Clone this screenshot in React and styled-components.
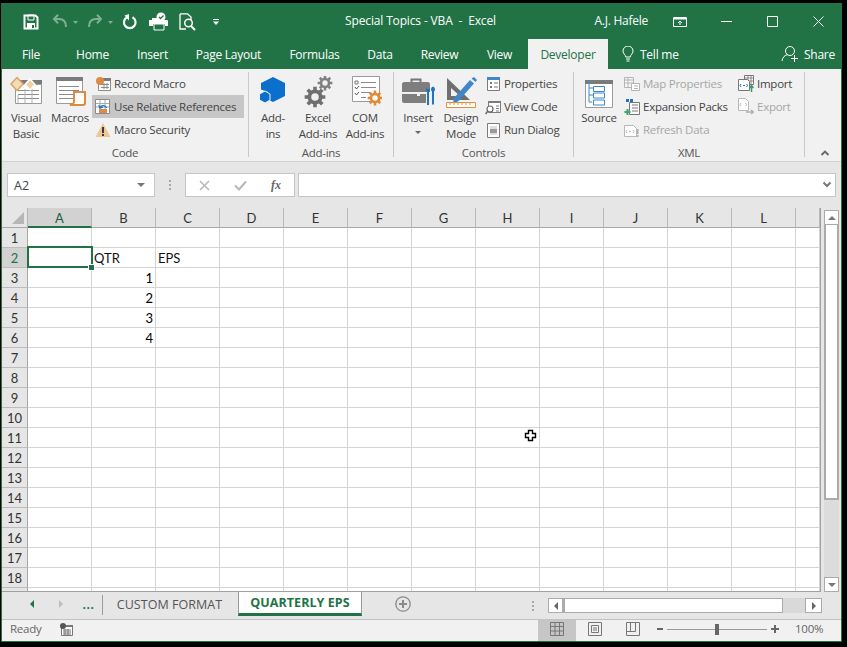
import React from "react";
import styled, { createGlobalStyle } from "styled-components";

const UI = `"Open Sans", "Noto Sans", sans-serif`;
const CELL = `Lato, "Liberation Sans", sans-serif`;
const GREEN = "#217346";

const Global = createGlobalStyle`
  html, body { margin: 0; padding: 0; background: #000; }
  body { font-family: ${UI}; overflow: hidden; }
  #root { padding: 3px 0 0 1px; width: 846px; height: 644px; box-sizing: border-box; }
`;

const Win = styled.div`
  position: relative;
  width: 841px; height: 639px; box-sizing: border-box;
  border: 1px solid ${GREEN};
  display: flex; flex-direction: column;
  background: #e6e6e6; overflow: hidden;
  font-size: 11.5px; letter-spacing: -0.25px; color: #444;
  svg { display: block; flex: none; }
`;

/* ---------- title bar ---------- */
const TitleBar = styled.div`
  height: 35px; background: ${GREEN}; color: #fff;
  display: grid; grid-template-columns: 1fr auto 1fr; align-items: center;
`;
const Qat = styled.div`display: flex; align-items: center; padding-left: 14px;`;
const QatSlot = styled.div`
  width: ${p => p.$w}px; height: 35px;
  display: flex; align-items: center; justify-content: center;
  opacity: ${p => (p.$dim ? 0.42 : 1)};
`;
const Title = styled.div`font-size: 12px; white-space: pre; position: relative; top: -1px; letter-spacing: -0.15px; left: -1px;`;
const TitleRight = styled.div`display: flex; align-items: center; justify-content: flex-end;`;
const UserName = styled.div`font-size: 12px; margin-right: 9px; position: relative; top: -1px;`;
const WinBtn = styled.div`
  width: 46px; height: 35px; display: flex; align-items: center; justify-content: center;
`;

/* ---------- tabs ---------- */
const TabRow = styled.div`
  height: 30px; background: ${GREEN}; display: flex; align-items: stretch; color: #fff;
  font-size: 12px;
`;
const Tab = styled.div`
  width: ${p => p.$w}px; flex: none; margin-left: ${p => p.$ml || 0}px; margin-right: ${p => p.$mr || 0}px;
  display: flex; align-items: center; justify-content: center;
  background: ${p => (p.$active ? "#f1f1f1" : "transparent")};
  color: ${p => (p.$active ? GREEN : "#fff")};
`;
const TellMe = styled.div`display: flex; align-items: center; gap: 6px; margin-left: 14px;`;
const Share = styled.div`display: flex; align-items: center; gap: 5px; margin-left: auto; margin-right: 6px;`;

/* ---------- ribbon ---------- */
const Ribbon = styled.div`
  height: 93px; box-sizing: border-box; background: #f1f1f1;
  border-bottom: 1px solid #d2d2d2;
  display: flex; padding-top: 3px;
`;
const Group = styled.div`
  width: ${p => p.$w}px; height: 85px; box-sizing: border-box; flex: none;
  border-right: 1px solid #c8c8c8;
  display: flex; flex-direction: column;
`;
const GroupBody = styled.div`display: flex; height: 74px;`;
const GroupLabel = styled.div`
  height: 11px; line-height: 14px; text-align: center; color: #555; font-size: 11.5px;
`;
const Big = styled.div`
  width: ${p => p.$w}px; flex: none; padding-top: 4px; box-sizing: border-box;
  display: flex; flex-direction: column; align-items: center; text-align: center; line-height: 16px;
  white-space: nowrap;
`;
const BigIcon = styled.div`height: 34px; display: flex; justify-content: center;`;
const Caret = styled.div`
  width: 0; height: 0; margin-top: 5px;
  border: 3px solid transparent; border-top: 3px solid #666; border-bottom: 0;
`;
const Stack = styled.div`
  width: ${p => p.$w}px; flex: none; display: flex; flex-direction: column;
  margin-left: ${p => p.$ml || 0}px;
`;
const Small = styled.div`
  height: 23px; display: flex; align-items: center; gap: 3px; white-space: nowrap;
  padding-left: ${p => p.$pad ?? 3}px;
  background: ${p => (p.$on ? "#c6c6c6" : "transparent")};
  color: ${p => (p.$dim ? "#a6a6a6" : "#444")};
`;
const Collapse = styled.div`
  margin-left: 15px; align-self: flex-end; padding-bottom: 4px;
`;

/* ---------- formula bar ---------- */
const FormulaBar = styled.div`
  height: 46px; box-sizing: border-box; padding: 11px 5px 0 5px; display: flex; align-items: flex-start;
  background: #e6e6e6; color: #444;
`;
const Field = styled.div`
  height: 24px; box-sizing: border-box; background: #fff; border: 1px solid #c6c6c6;
  width: ${p => (p.$w ? p.$w + "px" : "auto")}; flex: ${p => (p.$w ? "none" : 1)};
  margin-left: ${p => p.$ml || 0}px;
  display: flex; align-items: center;
`;
const NameText = styled.span`font-size: 12.5px; letter-spacing: 0; padding-left: 6px; flex: 1;`;
const Grip = styled.div`
  width: 30px; height: 24px; display: flex; align-items: center; justify-content: center;
`;
const FnSlot = styled.div`flex: 1; display: flex; justify-content: center; align-items: center;`;
const EndSlot = styled.div`
  flex: none; width: ${p => p.$w}px; margin-left: auto;
  display: flex; justify-content: center; align-items: center;
`;

/* ---------- sheet ---------- */
const SheetRow = styled.div`display: flex; height: 384px;`;
const GridPane = styled.div`
  width: 819px; height: 384px; box-sizing: border-box; flex: none; overflow: hidden; background: #fff;
  border-right: 1px solid #a0a0a0; border-bottom: 1px solid #a0a0a0;
  display: grid; grid-template-columns: 26px repeat(12, 64px) 24px; grid-auto-rows: 20px;
  font-family: ${CELL}; font-size: 13px; letter-spacing: 0; color: #111;
`;
const Corner = styled.div`
  background: #e6e6e6; border-right: 1px solid #b4b4b4; border-bottom: 1px solid #a8a8a8;
  box-sizing: border-box; display: flex; align-items: flex-end; justify-content: flex-end;
  padding: 0 3px 3px 0;
  &::before {
    content: ""; width: 12px; height: 12px; background: #b6b6b6;
    clip-path: polygon(100% 0, 100% 100%, 0 100%);
  }
`;
const ColHead = styled.div`
  box-sizing: border-box; text-align: center; line-height: 20px;
  background: ${p => (p.$on ? "#d2d2d2" : "#e6e6e6")};
  color: ${p => (p.$on ? "#1e5e3c" : "#333")};
  border-right: 1px solid #b8b8b8;
  border-bottom: ${p => (p.$on ? `2px solid ${GREEN}` : "1px solid #a8a8a8")};
`;
const RowHead = styled.div`
  box-sizing: border-box; text-align: center; line-height: 21px;
  background: ${p => (p.$on ? "#d2d2d2" : "#e6e6e6")};
  color: ${p => (p.$on ? GREEN : "#333")};
  border-right: 1px solid #a8a8a8; border-bottom: 1px solid #bcbcbc;
`;
const Cell = styled.div`
  position: relative; box-sizing: border-box; line-height: 21px; padding: 0 2px;
  border-right: 1px solid #d4d4d4; border-bottom: 1px solid #d4d4d4;
  text-align: ${p => (p.$num ? "right" : "left")};
  ${p => p.$num && "color:#000;"}
`;
const Selection = styled.div`
  position: absolute; left: -1px; top: -2px; width: 66px; height: 22px; box-sizing: border-box;
  border: 2px solid ${GREEN}; z-index: 2;
  &::after {
    content: ""; position: absolute; right: -3px; bottom: -4px; width: 5px; height: 5px;
    background: ${GREEN}; outline: 1px solid #fff;
  }
`;
const VStrip = styled.div`
  flex: 1; display: flex; flex-direction: column; padding: 2px 0 0 3px; box-sizing: border-box;
`;
const VBar = styled.div`
  width: 15px; height: 382px; display: flex; flex-direction: column; background: #dcdcdc;
`;
const ScrollBtn = styled.div`
  width: ${p => p.$w || 15}px; height: ${p => p.$h || 15}px; box-sizing: border-box; flex: none;
  background: #fff; border: 1px solid #ababab;
  display: flex; align-items: center; justify-content: center;
`;
const VThumb = styled.div`
  height: 275px; box-sizing: border-box; background: #fff;
  border: 2px solid #ababab; border-top: 0;
`;
const VTrack = styled.div`flex: 1;`;

/* ---------- sheet tabs ---------- */
const TabBar = styled.div`
  height: 28px; box-sizing: border-box; background: #e6e6e6;
  border-bottom: 1px solid #c2c2c2;
  display: flex; align-items: flex-start;
  padding-left: 15px;
`;
const Nav = styled.div`
  width: ${p => p.$w || 29}px; height: 24px; flex: none; display: flex; align-items: center; justify-content: center;
  color: ${GREEN}; font-weight: 700; font-size: 12px; letter-spacing: 0.5px;
`;
const NavSep = styled.div`width: 1px; height: 20px; margin-top: 3px; background: #9c9c9c; flex: none;`;
const SheetTab = styled.div`
  width: ${p => p.$w}px; height: 24px; box-sizing: border-box; flex: none;
  display: flex; align-items: center; justify-content: center; font-size: 12.5px; letter-spacing: 0.05px;
  ${p => p.$active
    ? `background:#fff;color:${GREEN};font-weight:700;border-left:1px solid #9a9a9a;border-right:1px solid #9a9a9a;border-bottom:3px solid ${GREEN};`
    : "color:#555;padding-right:2px;"}
`;
const AddSheet = styled.div`margin-left: 30px; width: 22px; height: 24px; display: flex; align-items: center; justify-content: center;`;
const HScrollWrap = styled.div`
  margin-left: auto; margin-right: 19px; display: flex; align-items: center; gap: 14px; padding-top: 6px;
`;
const HBar = styled.div`display: flex; width: 274px; height: 15px; background: #d9d9d9;`;
const HThumb = styled.div`
  width: 220px; box-sizing: border-box; background: #fff; border: 1px solid #ababab; border-left-width: 2px;
`;
const Dots = styled.div`display: flex; flex-direction: column; gap: 2px;
  i { display:block; width:2px; height:2px; background:#a8a8a8; }`;

/* ---------- status ---------- */
const Status = styled.div`
  height: 21px; box-sizing: border-box; background: #f1f1f1; display: flex; align-items: center; color: #666;
  padding: 0 0 3px 8px;
`;
const Ready = styled.div`width: 50px; font-size: 11.5px; margin-bottom: 1px;`;
const StatusRight = styled.div`margin: 0 0 -3px auto; display: flex; align-items: center; height: 21px; padding-right: 19px;`;
const ViewBtn = styled.div`
  width: 38px; height: 21px; box-sizing: border-box; padding-bottom: 3px; display: flex; align-items: center; justify-content: center;
  background: ${p => (p.$on ? "#c6c6c6" : "transparent")};
`;
const Zoom = styled.div`display: flex; align-items: center; margin-left: 5px; padding-bottom: 3px;`;
const Track = styled.div`
  width: 100px; height: 1px; background: #9a9a9a; margin: 0 4px; position: relative;
  display: flex; justify-content: center; align-items: center;
`;
const Thumb = styled.div`width: 4px; height: 11px; background: #666; flex: none;`;
const ZoomPct = styled.div`margin-left: 16px; padding-bottom: 4px; width: 27px; white-space: nowrap;`;
const Pointer = styled.div`position: absolute; left: 521px; top: 424px; z-index: 5;`;

/* ---------- icons ---------- */
const S = ({ w, h = w, children }) => <svg width={w} height={h} viewBox={`0 0 ${w} ${h}`} fill="none">{children}</svg>;

const gearPath = (x, y, R, n = 8) => {
  const r0 = R * 0.72, pts = [], step = (Math.PI * 2) / n;
  for (let i = 0; i < n; i++) {
    const a = i * step - Math.PI / 2;
    const d = step * 0.22, e = step * 0.3;
    [[r0, a - e], [R, a - d], [R, a + d], [r0, a + e]].forEach(([r, t]) =>
      pts.push(`${(x + r * Math.cos(t)).toFixed(2)} ${(y + r * Math.sin(t)).toFixed(2)}`));
  }
  return `M${pts.join("L")}Z`;
};
const Gear = ({ x, y, r, c = "#6f6f6f", hole = "#f1f1f1" }) => (
  <g>
    <path d={gearPath(x, y, r)} fill={c} />
    <circle cx={x} cy={y} r={r * 0.36} fill={hole} />
  </g>
);
const SheetLines = ({ x, y, w, n = 4, step = 4, c = "#8c8c8c" }) => (
  <g stroke={c}>
    {Array.from({ length: n }).map((_, i) => (
      <path key={i} d={`M${x} ${y + i * step + .5}h${w}`} />
    ))}
  </g>
);

const VbIcon = () => (
  <S w={34}>
    <path d="M6.500 8.500h26v19h-26z" fill="#fff" stroke="#9a9a9a" />
    <path d="M6 4h27v4H6z" fill="#7b7b7b" />
    <SheetLines x={9} y={14} w={21} n={3} />
    <path d="M9 19v8M16 13v14M23 13v14" stroke="#b0b0b0" />
    <path d="M8 1.500l6 6.500-6 6.500-6-6.500z" fill="#f4dcb6" stroke="#dca566" strokeWidth="1.500" />
    <path d="M21 3l5 5.500-5 5.500-5-5.500z" fill="#f0d2a6" stroke="#fff" strokeWidth="1.500" />
  </S>
);
const MacroIcon = () => (
  <S w={34}>
    <path d="M3.500 1.500h26v26h-26z" fill="#fff" stroke="#9a9a9a" />
    <path d="M3 1h27v4H3z" fill="#7b7b7b" />
    <SheetLines x={6} y={10} w={20} n={4} step={4} />
    <path d="M21 16h11v11c0 2-1 2-2 2H17c2-1 4-1 4-3z" fill="#fff" stroke="#dd8a42" strokeWidth="2" />
  </S>
);
const RecordIcon = () => (
  <S w={16}>
    <path d="M3.500 2.500h12v12h-12z" fill="#fff" stroke="#8c8c8c" />
    <path d="M3 2h13v3H3z" fill="#7b7b7b" />
    <path d="M6 8.500h8M6 11.500h8M9 7v6M12 7v6" stroke="#8c8c8c" />
    <circle cx="5" cy="5" r="4" fill="#dd8a42" />
  </S>
);
const RelativeIcon = () => (
  <S w={16}>
    <path d="M.5.500h14v14H.5z" fill="#fff" stroke="#8a8a8a" />
    <path d="M1 4.500h13M1 8h13M5 1v13M10 1v13" stroke="#a8a8a8" />
    <path d="M4 10h8v4H4z" fill="#dd8a42" />
    <path d="M11.500 9c-1-3-5-3-6.500-.5M3.800 6l1 3 3-.6" stroke="#1f74c6" strokeWidth="1.300" />
  </S>
);
const WarnIcon = () => (
  <S w={16}>
    <path d="M8 1l7.500 14H.5z" fill="#edc795" />
    <path d="M7 5h2v6H7zM7 12h2v2H7z" fill="#3a3a3a" />
  </S>
);
const HexIcon = () => (
  <S w={30}>
    <path d="M15 2l12 6v13l-12 6-5-2.500V17l-7-2.500V8z" fill="#0b6fcd" transform="translate(0 -1)" />
    <path d="M7 15l5 3v6l-5 3-5.500-3v-6z" fill="#0b6fcd" stroke="#f1f1f1" strokeWidth="1" />
  </S>
);
const GearsIcon = () => (
  <S w={34}>
    <Gear x={14} y={21} r={10.500} />
    <Gear x={24} y={7} r={7.500} c="#808080" />
  </S>
);
const ComIcon = () => (
  <S w={34}>
    <path d="M4.500.500h27v25h-27z" fill="#fff" stroke="#9a9a9a" />
    <path d="M7 5h3v3H7z" stroke="#7a7a7a" />
    <path d="M13 6.500h15M13 11.500h15M13 16.500h9M13 21.500h5" stroke="#8a8a8a" />
    <path d="M7 11l1.500 2 2.500-3M7 17l1.500 2 2.500-3" stroke="#555" />
    <Gear x={27} y={22} r={7.500} c="#e28a33" hole="#fff" />
  </S>
);
const InsertIcon = () => (
  <S w={34}>
    <path d="M10.500 6V3.500h9V6" stroke="#777" strokeWidth="2" />
    <path d="M3 6h24c1 0 2 1 2 2v8H1V8c0-1 1-2 2-2z" fill="#7e7e7e" />
    <path d="M1 18h15v2h3v-2h6v9H3c-1 0-2-1-2-2z" fill="#7e7e7e" />
    <path d="M25 11v4l1 1v13h2V16l1-1v-4l-1 2h-2zM32 10.500a3 3 0 0 0-1 5v13h2v-13a3 3 0 0 0-1-5z" fill="#1f74c6" />
  </S>
);
const DesignIcon = () => (
  <S w={34} h={34}>
    <path d="M3 2v22h23zM7 12v8h9z" fill="#6f6f6f" fillRule="evenodd" />
    <path d="M10 22L26 4l4 3.500L14 25.500 9 27z" fill="#3f87ca" />
    <path d="M27.500 2.500l4 3.500 1.500-2-3-3z" fill="#3f87ca" />
    <path d="M2.500 26.500h29v5h-29z" fill="#fff" stroke="#e0903f" />
    <path d="M6 27v2M10 27v2M14 27v2M18 27v2M22 27v2M26 27v2" stroke="#e0903f" />
  </S>
);
const PropsIcon = () => (
  <S w={16}>
    <path d="M2.500 1.500h12v13h-12z" fill="#fff" stroke="#7c7c7c" />
    <path d="M2 1h13v3H2z" fill="#3f87ca" />
    <path d="M5 6h2v2H5zM5 10h2v2H5z" fill="#777" />
    <path d="M9 7h4M9 11h4" stroke="#777" />
  </S>
);
const ViewCodeIcon = () => (
  <S w={16}>
    <path d="M3.500 2.500h12v11h-12z" fill="#fff" stroke="#7c7c7c" />
    <path d="M3 2h13v2H3z" fill="#7b7b7b" />
    <path d="M11 7h3M11 9.500h3M11 12h3" stroke="#7c7c7c" />
    <circle cx="5" cy="10" r="3" fill="#fff" stroke="#666" strokeWidth="1.200" />
    <path d="M3 12l-2.500 3" stroke="#666" strokeWidth="1.500" />
  </S>
);
const RunIcon = () => (
  <S w={16}>
    <path d="M2.500 1.500h12v14h-12z" fill="#fff" stroke="#7c7c7c" />
    <path d="M5 4h7v9H5z" fill="#ddd" />
    <path d="M5 7h7v4H5z" fill="#999" />
  </S>
);
const SourceIcon = () => (
  <S w={34}>
    <path d="M3.500 4.500h27v27h-27z" fill="#fff" stroke="#9a9a9a" />
    <path d="M3 4h28v4H3z" fill="#7b7b7b" />
    <path d="M7 4v22h3M7 12h4M7 19h4" stroke="#3f87ca" />
    <path d="M11.500 10.500h11v5h-11zM11.500 17h11v5h-11zM11.500 24h11v5h-11z" stroke="#3f87ca" fill="#fff" />
  </S>
);
const MapIcon = () => (
  <S w={16}>
    <g stroke="#b4b4b4">
      <path d="M.5 1.500h9v10h-9z" fill="#f6f6f6" />
      <path d="M1 4h8M1 7h8M4 2v9" />
      <path d="M7.500 7.500h8v7h-8z" fill="#fff" />
      <path d="M10 10h4M10 12.500h4" />
    </g>
  </S>
);
const PacksIcon = () => (
  <S w={16} h={18}>
    <path d="M5.500 4.500h10v12h-10z" fill="#fff" stroke="#777" />
    <path d="M8 7h6M8 10h6M8 13h6" stroke="#777" />
    <path d="M2 1h3v3H2zM6 1h3v3H6z" fill="#1f74c6" />
    <path d="M3.500 11v6M.5 14h6" stroke="#3aa76d" strokeWidth="2" />
  </S>
);
const DocXml = ({ c = "#b8b8b8", text = "#b8b8b8" }) => (
  <g>
    <path d="M.5 3.500h9l3 3v8h-12z" fill="#fff" stroke={c} />
    <path d="M3 8l-1 1.500L3 11M9 8l1 1.500L9 11" stroke={text} />
    <path d="M5 9h2v1H5z" fill={text} />
  </g>
);
const RefreshIcon = () => (
  <S w={16}><DocXml /><path d="M13.500 7v5M13.500 13v2" stroke="#b0b0b0" strokeWidth="2" /></S>
);
const ImportIcon = () => (
  <S w={16} h={18}>
    <path d="M6.500.500h9v9h-9z" fill="#fff" stroke="#777" />
    <path d="M7 3h8M7 6h8M10 1v8M13 1v8" stroke="#888" />
    <path d="M.5 4.500h9l2 2v9H.5z" fill="#fff" stroke="#777" />
    <path d="M3 9l-1 1.500L3 12M8.500 9l1 1.500-1 1.500" stroke="#1f74c6" />
    <path d="M5 10h2v1H5z" fill="#1f74c6" />
    <path d="M13.500 17v-6M11.500 13l2-2.500 2 2.500" stroke="#3a9a6a" strokeWidth="1.500" />
  </S>
);
const ExportIcon = () => (
  <S w={16} h={18}>
    <path d="M.5.500h7l3 3v9H.5z" fill="#fff" stroke="#b8b8b8" />
    <path d="M3 5l-1 1.500L3 8M7.500 5l1 1.500-1 1.500" stroke="#b8b8b8" />
    <path d="M8 14h7M13 12l2.500 2-2.500 2" stroke="#b0b0b0" strokeWidth="1.300" />
  </S>
);

const SaveIcon = () => (
  <S w={16}>
    <path d="M1.500 1.500h11l2 2v11h-13z" stroke="#fff" strokeWidth="2" />
    <path d="M5 1h6v5H5z" stroke="#fff" strokeWidth="1" />
    <path d="M4 9h8v6H4z" fill="#fff" />
    <path d="M9 11h2v3H9z" fill={GREEN} />
  </S>
);
const Undo = ({ flip, x = 3 }) => (
  <svg width="30" height="16" viewBox="0 0 30 16" fill="none">
    <g transform={flip ? `translate(${x + 15} 0) scale(-1 1)` : `translate(${x} 0)`} stroke="#fff" strokeWidth="2">
      <path d="M14 13C14 6 10 5 7 5H2M6 .8L2 5l4 4.200" />
    </g>
    <path d="M24 7h5l-2.500 3z" fill="#fff" />
  </svg>
);
const RefreshQat = () => (
  <S w={16}>
    <path d="M10.500 3.200a5.800 5.800 0 1 1-5.500 0" stroke="#fff" strokeWidth="2.200" />
    <path d="M7 0v6.500L2.500 1.500z" fill="#fff" />
  </S>
);
const QuickPrint = () => (
  <S w={20}>
    <path d="M0 8h3V6h12v2h3c1 0 1 1 1 1v5h-3v-2H4v2H0z" fill="#fff" />
    <path d="M5 12h10v6H5z" fill={GREEN} stroke="#fff" />
    <circle cx="12" cy="5" r="4.500" fill="#fff" />
    <path d="M10 5l1.500 1.500L14.500 3.500" stroke={GREEN} strokeWidth="1.300" />
  </S>
);
const PreviewIcon = () => (
  <S w={18} h={18}>
    <path d="M1 .8h7.500L12 4v3M1 1v15h6" stroke="#fff" strokeWidth="1.300" />
    <circle cx="9.500" cy="10" r="3.800" stroke="#fff" strokeWidth="1.500" />
    <path d="M12 13l4 4" stroke="#fff" strokeWidth="2" />
  </S>
);
const MoreIcon = () => (
  <S w={8}>
    <path d="M1 1.500h6" stroke="#fff" /><path d="M1 3.500h6L4 7z" fill="#fff" />
  </S>
);
const RibbonOpt = () => (
  <S w={14}>
    <path d="M.5 2.500h13v9H.5z" stroke="#fff" /><path d="M1 3.500h12" stroke="#fff" strokeWidth="2" />
    <path d="M7 10V6M5 8l2-2 2 2" stroke="#fff" />
  </S>
);
const MinIcon = () => <S w={11}><path d="M0 5.500h11" stroke="#fff" /></S>;
const MaxIcon = () => <S w={11}><path d="M.5.500h10v10H.5z" stroke="#fff" /></S>;
const CloseIcon = () => <S w={11}><path d="M.5.500l10 10M10.500.500l-10 10" stroke="#fff" /></S>;
const BulbIcon = () => (
  <S w={12} h={16}>
    <path d="M3.800 11C3.500 8.500 1 8 1 5a5 5 0 0 1 10 0c0 3-2.500 3.500-2.800 6z" stroke="#fff" />
    <path d="M4 13h4M4.500 15h3" stroke="#fff" />
  </S>
);
const UserIcon = () => (
  <S w={18}>
    <circle cx="9" cy="6" r="4.500" stroke="#fff" />
    <path d="M1 16c.5-4 3-6 6-6.500" stroke="#fff" />
    <path d="M13.500 10v7M10 13.500h7" stroke="#fff" />
  </S>
);
const Chev = ({ c = "#777" }) => <S w={10} h={8}><path d="M1.500 1.500L5 5l3.500-3.500" stroke={c} strokeWidth="2" /></S>;
const ChevUp = () => <S w={10} h={7}><path d="M1.500 5L5 1.500 8.500 5" stroke="#666" strokeWidth="1.800" /></S>;
const Tri = ({ d = "down", c = "#777" }) => {
  const p = { down: "M0 0h8L4 4z", up: "M0 4h8L4 0z", left: "M4 0v8L0 4z", right: "M0 0v8l4-4z" }[d];
  const vert = d === "left" || d === "right";
  return <svg width={vert ? 4 : 8} height={vert ? 8 : 4} viewBox={vert ? "0 0 4 8" : "0 0 8 4"}><path d={p} fill={c} /></svg>;
};
const XIcon = () => <S w={11}><path d="M1 1l9 9M10 1l-9 9" stroke="#b8b8b8" strokeWidth="1.500" /></S>;
const CheckIcon = () => <S w={13} h={11}><path d="M1 5.500l4 4 7-8" stroke="#b8b8b8" strokeWidth="2" /></S>;
const FxLabel = styled.span`
  font-family: "Liberation Serif", serif; font-style: italic; font-weight: 700; font-size: 12px; color: #666; letter-spacing: 0;
`;
const PlusCircle = () => (
  <S w={16}>
    <circle cx="8" cy="8" r="7.200" stroke="#8a8a8a" strokeWidth="1.300" />
    <path d="M8 4v8M4 8h8" stroke="#8a8a8a" strokeWidth="2" />
  </S>
);
const MacroStatus = () => (
  <S w={13}>
    <path d="M1.500 3.500h11v9h-11z" fill="#fff" stroke="#777" />
    <path d="M2 2h11v2H2z" fill="#777" />
    <path d="M3 7h8M3 9h8M3 11h8M5 6v6M8 6v6" stroke="#777" />
    <circle cx="3" cy="3" r="3" fill="#555" />
  </S>
);
const NormalView = () => (
  <S w={14}><path d="M.5.500h13v13H.5zM.5 4.500h13M.5 9h13M5 .5v13M9.500.5v13" stroke="#777" /></S>
);
const LayoutView = () => (
  <S w={14}><path d="M.5.500h13v13H.5z" stroke="#777" /><path d="M3.500 3.500h7v7h-7zM5 6h4M5 8h4" stroke="#777" /></S>
);
const BreakView = () => (
  <S w={14}><path d="M.5.500h13v13H.5zM.5 9.500h9V.5M4.500.5v9" stroke="#777" /></S>
);
const Minus = () => <S w={6}><path d="M0 3h6" stroke="#666" strokeWidth="2" /></S>;
const Plus = () => <S w={8}><path d="M0 4h8M4 0v8" stroke="#666" strokeWidth="2" /></S>;
const CrossCursor = () => (
  <S w={16}>
    <path d="M5.500 2.500h4v3h3v4h-3v3h-4v-3h-3v-4h3z" fill="#fff" stroke="#000" strokeWidth="1.400" />
  </S>
);

/* ---------- data ---------- */
const COLS = ["A", "B", "C", "D", "E", "F", "G", "H", "I", "J", "K", "L", ""];
const DATA = {
  2: { B: "QTR", C: "EPS" },
  3: { B: 1 }, 4: { B: 2 }, 5: { B: 3 }, 6: { B: 4 },
};
const ROWS = Array.from({ length: 19 }, (_, i) => i + 1);

const TABS = [
  ["File", 58, 0, 2], ["Home", 61, 0, 0], ["Insert", 59], ["Page Layout", 93], ["Formulas", 79],
  ["Data", 52], ["Review", 67], ["View", 53],
];

export default function App() {
  return (
    <>
      <Global />
      <Win>
        <TitleBar>
          <Qat>
            <QatSlot $w={30}><SaveIcon /></QatSlot>
            <QatSlot $w={36} $dim><Undo /></QatSlot>
            <QatSlot $w={34} $dim><Undo flip x={4} /></QatSlot>
            <QatSlot $w={28}><RefreshQat /></QatSlot>
            <QatSlot $w={30}><QuickPrint /></QatSlot>
            <QatSlot $w={28}><PreviewIcon /></QatSlot>
            <QatSlot $w={28}><MoreIcon /></QatSlot>
          </Qat>
          <Title>Special Topics - VBA  -  Excel</Title>
          <TitleRight>
            <UserName>A.J. Hafele</UserName>
            <WinBtn><RibbonOpt /></WinBtn>
            <WinBtn><MinIcon /></WinBtn>
            <WinBtn><MaxIcon /></WinBtn>
            <WinBtn><CloseIcon /></WinBtn>
          </TitleRight>
        </TitleBar>

        <TabRow>
          {TABS.map(([t, w, ml, mr]) => <Tab key={t} $w={w} $ml={ml} $mr={mr}>{t}</Tab>)}
          <Tab $w={80} $ml={2} $active>Developer</Tab>
          <TellMe><BulbIcon />Tell me</TellMe>
          <Share><UserIcon />Share</Share>
        </TabRow>

        <Ribbon>
          <Group $w={247}>
            <GroupBody>
              <Big $w={48}><BigIcon><VbIcon /></BigIcon>Visual<br />Basic</Big>
              <Big $w={40}><BigIcon><MacroIcon /></BigIcon>Macros</Big>
              <Stack $w={152} $ml={2}>
                <Small><RecordIcon />Record Macro</Small>
                <Small $on><RelativeIcon />Use Relative References</Small>
                <Small><WarnIcon />Macro Security</Small>
              </Stack>
            </GroupBody>
            <GroupLabel>Code</GroupLabel>
          </Group>
          <Group $w={145}>
            <GroupBody>
              <Big $w={48}><BigIcon><HexIcon /></BigIcon>Add-<br />ins</Big>
              <Big $w={42}><BigIcon><GearsIcon /></BigIcon>Excel<br />Add-ins</Big>
              <Big $w={52}><BigIcon><ComIcon /></BigIcon>COM<br />Add-ins</Big>
            </GroupBody>
            <GroupLabel>Add-ins</GroupLabel>
          </Group>
          <Group $w={180}>
            <GroupBody>
              <Big $w={48}><BigIcon><InsertIcon /></BigIcon>Insert<Caret /></Big>
              <Big $w={38}><BigIcon><DesignIcon /></BigIcon>Design<br />Mode</Big>
              <Stack $w={88} $ml={2}>
                <Small><PropsIcon />Properties</Small>
                <Small><ViewCodeIcon />View Code</Small>
                <Small><RunIcon />Run Dialog</Small>
              </Stack>
            </GroupBody>
            <GroupLabel>Controls</GroupLabel>
          </Group>
          <Group $w={231}>
            <GroupBody>
              <Big $w={50}><BigIcon><SourceIcon /></BigIcon>Source</Big>
              <Stack $w={114}>
                <Small $pad={0} $dim><MapIcon />Map Properties</Small>
                <Small $pad={0}><PacksIcon />Expansion Packs</Small>
                <Small $pad={0} $dim><RefreshIcon />Refresh Data</Small>
              </Stack>
              <Stack $w={60}>
                <Small $pad={0}><ImportIcon />Import</Small>
                <Small $pad={0} $dim><ExportIcon />Export</Small>
              </Stack>
            </GroupBody>
            <GroupLabel>XML</GroupLabel>
          </Group>
          <Collapse><ChevUp /></Collapse>
        </Ribbon>

        <FormulaBar>
          <Field $w={148}>
            <NameText>A2</NameText>
            <EndSlot $w={26}><Tri /></EndSlot>
          </Field>
          <Grip><Dots><i /><i /><i /></Dots></Grip>
          <Field $w={110}>
            <FnSlot><XIcon /></FnSlot>
            <FnSlot><CheckIcon /></FnSlot>
            <FnSlot><FxLabel>fx</FxLabel></FnSlot>
          </Field>
          <Field $ml={3}>
            <EndSlot $w={16}><Chev /></EndSlot>
          </Field>
        </FormulaBar>

        <SheetRow>
          <GridPane>
            <Corner />
            {COLS.map((c, i) => <ColHead key={i} $on={c === "A"}>{c}</ColHead>)}
            {ROWS.map(r => (
              <React.Fragment key={r}>
                <RowHead $on={r === 2}>{r < 19 ? r : ""}</RowHead>
                {COLS.map((c, i) => {
                  const v = DATA[r]?.[c];
                  return (
                    <Cell key={i} $num={typeof v === "number"}>
                      {v}
                      {r === 2 && c === "A" && <Selection />}
                    </Cell>
                  );
                })}
              </React.Fragment>
            ))}
          </GridPane>
          <VStrip>
            <VBar>
              <ScrollBtn><Tri d="up" /></ScrollBtn>
              <VThumb />
              <VTrack />
              <ScrollBtn><Tri /></ScrollBtn>
            </VBar>
          </VStrip>
        </SheetRow>

        <TabBar>
          <Nav><Tri d="left" c={GREEN} /></Nav>
          <Nav><Tri d="right" c="#bdbdbd" /></Nav>
          <Nav $w={27}>...</Nav>
          <NavSep />
          <SheetTab $w={135}>CUSTOM FORMAT</SheetTab>
          <SheetTab $w={124} $active>QUARTERLY EPS</SheetTab>
          <AddSheet><PlusCircle /></AddSheet>
          <HScrollWrap>
            <Dots><i /><i /><i /></Dots>
            <HBar>
              <ScrollBtn><Tri d="left" c="#666" /></ScrollBtn>
              <HThumb />
              <VTrack />
              <ScrollBtn $w={17}><Tri d="right" c="#666" /></ScrollBtn>
            </HBar>
          </HScrollWrap>
        </TabBar>

        <Status>
          <Ready>Ready</Ready>
          <MacroStatus />
          <StatusRight>
            <ViewBtn $on><NormalView /></ViewBtn>
            <ViewBtn><LayoutView /></ViewBtn>
            <ViewBtn><BreakView /></ViewBtn>
            <Zoom>
              <Minus />
              <Track><Thumb /></Track>
              <Plus />
            </Zoom>
            <ZoomPct>100%</ZoomPct>
          </StatusRight>
        </Status>
        <Pointer><CrossCursor /></Pointer>
      </Win>
    </>
  );
}
